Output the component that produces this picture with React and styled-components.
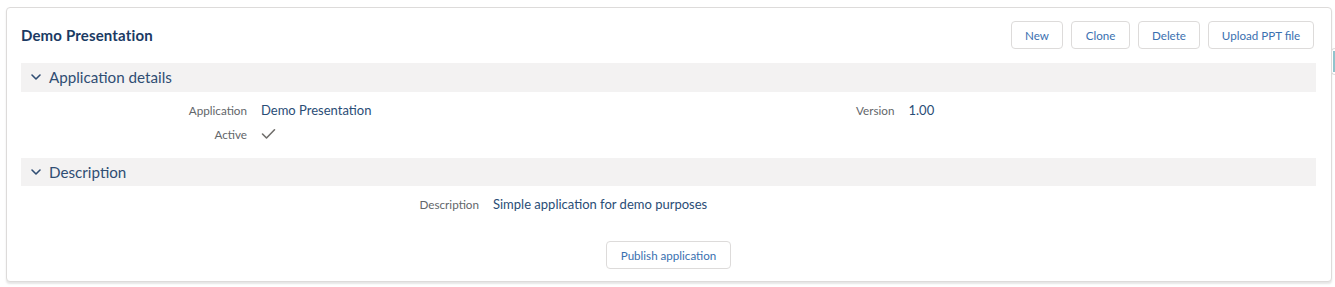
import React from "react";
import styled, { createGlobalStyle } from "styled-components";

const Global = createGlobalStyle`
  html, body { margin: 0; padding: 0; background: #ffffff; }
  body { font-family: Lato, "Noto Sans", Arial, sans-serif; }
  * { box-sizing: border-box; }
`;

const Page = styled.div`
  position: relative;
  width: 1335px;
  height: 287px;
  padding: 7px 0 0 6px;
`;

const Card = styled.div`
  width: 1326px;
  height: 275px;
  background: #fff;
  border: 1px solid #dddbda;
  border-radius: 4px;
  box-shadow: 0 2px 2px rgba(0, 0, 0, 0.1);
  padding: 13px 15px 0 14px;
  display: flex;
  flex-direction: column;
`;

const Header = styled.div`
  display: flex;
  align-items: center;
  justify-content: space-between;
  height: 28px;
  padding-right: 2px;
`;

const Title = styled.h1`
  margin: 0 0 1px;
  font-size: 15px;
  font-weight: 700;
  color: #1b3a63;
  letter-spacing: 0.15px;
`;

const Actions = styled.div`
  display: flex;
  gap: 8px;
`;

const Button = styled.button`
  height: 28px;
  width: ${(p) => p.$w}px;
  padding: 0;
  background: #fff;
  border: 1px solid #dddbda;
  border-radius: 4px;
  color: #3a70b0;
  font-family: inherit;
  font-size: 11.6px;
  cursor: pointer;
`;

const Section = styled.section`
  margin-top: ${(p) => p.$mt}px;
`;

const SectionHead = styled.div`
  height: ${(p) => p.$h}px;
  background: #f3f2f2;
  display: flex;
  align-items: center;
  padding-left: 9px;
  gap: 7px;
  color: #2f4d73;
  font-size: 15.2px;
  padding-bottom: 1px;
`;

const Body = styled.div`
  padding: 6px 0 12px;
  display: grid;
  grid-template-columns: ${(p) => (p.$cols === 2 ? "1fr 1fr" : "1fr")};
`;

const Field = styled.div`
  display: flex;
  align-items: center;
  height: 24px;
`;

const Label = styled.span`
  width: ${(p) => p.$w}px;
  text-align: right;
  font-size: 11.7px;
  color: #63666a;
  flex-shrink: 0;
  padding-right: 14px;
`;

const Value = styled.span`
  font-size: 13px;
  color: #2a4d76;
  display: flex;
  align-items: center;
`;

const Footer = styled.div`
  display: flex;
  justify-content: center;
  margin-top: 13px;
`;

const SideTab = styled.div`
  position: absolute;
  right: 0;
  top: 48px;
  width: 4px;
  height: 27px;
  border: 1px solid #dddbda;
  border-right: none;
  border-radius: 4px 0 0 4px;
  background: #fff;
  display: flex;
  justify-content: flex-end;
  padding: 2px 0;
  &::after {
    content: "";
    width: 2px;
    background: #8fc3cc;
  }
`;

const Chevron = () => (
  <svg width="12" height="12" viewBox="0 0 12 12" fill="none">
    <path d="M2 4l4 4 4-4" stroke="#2f4d73" strokeWidth="1.6" strokeLinecap="round" strokeLinejoin="round" />
  </svg>
);

const Check = () => (
  <svg width="15" height="12" viewBox="0 0 15 12" fill="none">
    <path d="M1.5 6l4 4L13.5 1.8" stroke="#706e6b" strokeWidth="1.6" strokeLinecap="round" strokeLinejoin="round" />
  </svg>
);

export default function App() {
  return (
    <>
      <Global />
      <Page>
        <Card>
          <Header>
            <Title>Demo Presentation</Title>
            <Actions>
              <Button $w={52}>New</Button>
              <Button $w={59}>Clone</Button>
              <Button $w={62}>Delete</Button>
              <Button $w={106}>Upload PPT file</Button>
            </Actions>
          </Header>
          <Section $mt={14}>
            <SectionHead $h={29}>
              <Chevron />
              Application details
            </SectionHead>
            <Body $cols={2}>
              <div>
                <Field>
                  <Label $w={240}>Application</Label>
                  <Value>Demo Presentation</Value>
                </Field>
                <Field>
                  <Label $w={240}>Active</Label>
                  <Value><Check /></Value>
                </Field>
              </div>
              <div>
                <Field>
                  <Label $w={240}>Version</Label>
                  <Value>1.00</Value>
                </Field>
              </div>
            </Body>
          </Section>
          <Section $mt={0}>
            <SectionHead $h={28}>
              <Chevron />
              Description
            </SectionHead>
            <Body $cols={1}>
              <Field>
                <Label $w={472}>Description</Label>
                <Value>Simple application for demo purposes</Value>
              </Field>
            </Body>
          </Section>
          <Footer>
            <Button $w={125}>Publish application</Button>
          </Footer>
        </Card>
        <SideTab />
      </Page>
    </>
  );
}
